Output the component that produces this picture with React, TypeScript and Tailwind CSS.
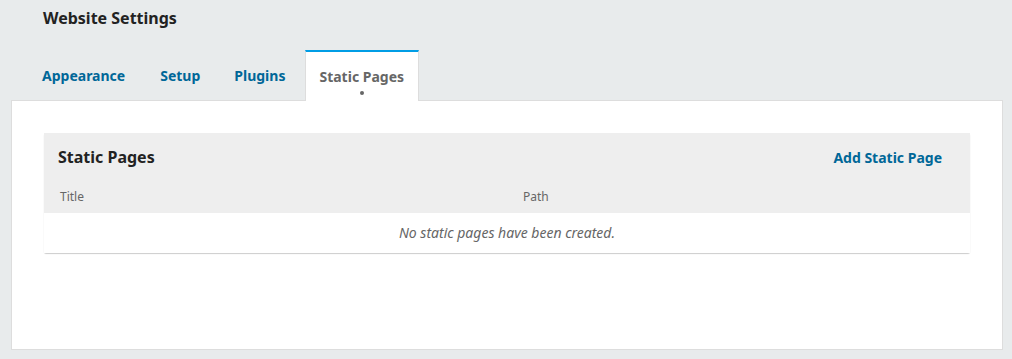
export default function App() {
  const tabs = ['Appearance', 'Setup', 'Plugins', 'Static Pages']
  const active = 'Static Pages'

  return (
    <div className="min-h-[359px] bg-[#e8ebec] font-['Noto_Sans',sans-serif] text-[#222]">
      {/* Page title */}
      <div className="h-[36px] pl-[43px] pt-[7px]">
        <h1 className="text-[16px] font-bold leading-[22px]">Website Settings</h1>
      </div>

      {/* Tabs */}
      <div className="-mt-px flex gap-[6px] pl-[28px] pt-[15px]">
        {tabs.map((tab, i) => {
          const isActive = tab === active
          return isActive ? (
            <div
              key={tab}
              className="relative z-10 -mb-px flex h-[51px] flex-col items-center border-x border-t-2 border-x-[#ddd] border-t-[#009de5] bg-white pl-[13px] pr-[14px] pt-[15px]"
            >
              <span className="text-[14px] font-bold leading-[20px] text-[#666]">{tab}</span>
              <span className="mt-[4px] h-[4px] w-[4px] rounded-full bg-[#666]" />
            </div>
          ) : (
            <div key={tab} className={`flex h-[50px] items-start pl-[14px] pt-[16px] ${i === 0 ? 'pr-[15px]' : 'pr-[14px]'}`}>
              <span className="text-[14px] font-bold leading-[20px] text-[#006798]">{tab}</span>
            </div>
          )
        })}
      </div>

      {/* Panel */}
      <div className="ml-[11px] mr-[9px] h-[250px] border border-[#ddd] bg-white px-[32px] pt-[32px]">
        <div className="rounded-[2px] shadow-[0_1px_1px_rgba(0,0,0,0.2)]">
          <div className="bg-[#eeeeee] px-[14px]">
            <div className="flex h-[48px] items-center justify-between">
              <h2 className="text-[16px] font-bold text-[#222]">Static Pages</h2>
              <button className="mr-[14px] text-[14px] font-bold text-[#006798]">Add Static Page</button>
            </div>
            <div className="flex h-[32px] items-center pb-[1px] text-[12px] text-[#666]">
              <div className="w-[465px] pl-[2px]">Title</div>
              <div>Path</div>
            </div>
          </div>
          <div className="flex h-[40px] items-center justify-center bg-white pb-[2px] text-[14px] italic text-[#666]">
            No static pages have been created.
          </div>
        </div>
      </div>
    </div>
  )
}
